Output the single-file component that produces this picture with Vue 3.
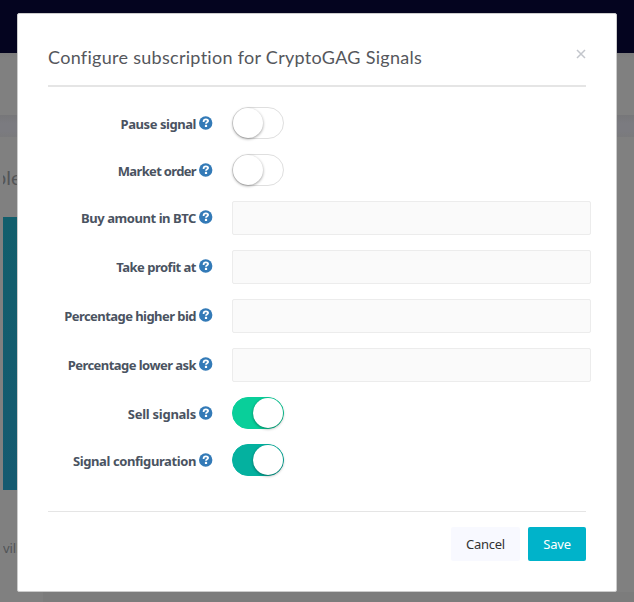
<template>
    <div class="page">
        <div class="topbar"></div>
        <div class="subheader"></div>
        <div class="divider"></div>
        <div class="backdrop-content">
            <div class="page-title"><span>ple</span></div>
            <div class="banner"></div>
            <div class="page-text">vill</div>
            <div class="page-footer"></div>
        </div>

        <div class="modal">
            <div class="modal-header">
                <h4><span class="title">Configure subscription for CryptoGAG Signals</span></h4>
                <button class="close" aria-label="Close">
                    <svg width="10" height="10" viewBox="0 0 10 10"><path d="M1 1L9 9M9 1L1 9" /></svg>
                </button>
            </div>
            <div class="modal-body">
                <div v-for="row in rows" :key="row.label" class="form-row">
                    <label :class="row.key">{{ row.label }}</label>
                    <svg class="help" width="14" height="14" viewBox="0 0 14 14">
                        <circle cx="6.7" cy="7" r="6.7" fill="#337ab7" />
                        <path d="M4.6 5.9C4.6 4 5.4 3.3 6.9 3.3C8.3 3.3 9.1 4 9.1 5C9.1 6.4 7 6.2 7 7.8" fill="none" stroke="#fff" stroke-width="1.8" />
                        <path d="M5.9 8.8H8.1V11H5.9Z" fill="#fff" />
                    </svg>
                    <input v-if="row.type === 'input'" type="text" class="field" disabled>
                    <div v-else :class="['switch', row.state]" @click="toggle(row)"><div class="knob"></div></div>
                </div>
            </div>
            <div class="modal-footer">
                <button class="btn cancel"><span>Cancel</span></button>
                <button class="btn save"><span>Save</span></button>
            </div>
        </div>
    </div>
</template>

<script setup>
import { reactive } from 'vue';

const rows = reactive([
    { key: 'pause', label: 'Pause signal', type: 'switch', state: '' },
    { key: 'market', label: 'Market order', type: 'switch', state: '' },
    { key: 'buy', label: 'Buy amount in BTC', type: 'input' },
    { key: 'profit', label: 'Take profit at', type: 'input' },
    { key: 'higher', label: 'Percentage higher bid', type: 'input' },
    { key: 'lower', label: 'Percentage lower ask', type: 'input' },
    { key: 'sell', label: 'Sell signals', type: 'switch', state: 'green' },
    { key: 'config', label: 'Signal configuration', type: 'switch', state: 'teal' },
]);

function toggle(row) {
    row.state = row.state ? '' : (row.key === 'config' ? 'teal' : 'green');
}
</script>

<style>
body{
    margin: 0;
    overflow: hidden;
}
</style>

<style scoped>
*{
    box-sizing: border-box;
}
.page{
    position: relative;
    width: 634px;
    height: 602px;
    overflow: hidden;
    background: #808080;
    font-family: 'Noto Sans', sans-serif;
    font-size: 13px;
}
.topbar{
    height: 53px;
    background: #04041f;
}
.subheader{
    height: 62px;
    background: linear-gradient(#7c7c7c, #808080 5px);
}
.divider{
    height: 22px;
    background: linear-gradient(#777779, #7b7b80 8px, #7b7b80 16px, #7a7a7c);
}
.backdrop-content{
    margin-left: 3px;
    overflow: hidden;
}
.page-title{
    height: 80px;
    padding-top: 28px;
    font-family: Lato, sans-serif;
    font-size: 20px;
    line-height: 24px;
    color: #535557;
}
.page-title span{
    margin-left: -8px;
}
.banner{
    width: 200px;
    height: 273px;
    background: linear-gradient(#125e6c, #155a70);
}
.page-text{
    height: 102px;
    padding-top: 48px;
    line-height: 20px;
    color: #515457;
    letter-spacing: -.1px;
}
.page-footer{
    height: 10px;
    margin-left: 40px;
    background: #7c7c7c;
}
.modal{
    position: absolute;
    left: 17px;
    top: 13px;
    width: 600px;
    height: 579px;
    padding: 30px;
    background: #fff;
    border: 1px solid #ccc;
    border-radius: 2px;
}
.modal-header{
    display: flex;
    justify-content: space-between;
    height: 43px;
    border-bottom: 2px solid #e5e5e5;
}
h4{
    margin: -1px 0 0;
    font-family: Lato, sans-serif;
    font-size: 18px;
    font-weight: 400;
    line-height: 28px;
    color: #55575c;
    white-space: nowrap;
}
.title{
    letter-spacing: .29px;
}
.close{
    width: 10px;
    height: 10px;
    margin-top: 5px;
    padding: 0;
    border: 0;
    background: none;
}
.close svg{
    display: block;
}
.close path{
    stroke: #c3c6cc;
    stroke-width: 1.5;
}
.modal-body{
    display: flex;
    flex-direction: column;
    gap: 15px;
    height: 424px;
    padding-top: 20px;
}
.form-row{
    display: flex;
}
label{
    width: 148px;
    flex-shrink: 0;
    padding-top: 8px;
    font-weight: 700;
    line-height: 18px;
    text-align: right;
    letter-spacing: -.5px;
    color: #4a5361;
    white-space: nowrap;
}
label.pause, label.buy{
    letter-spacing: -.44px;
}
label.market{
    letter-spacing: -.66px;
}
label.higher, label.lower{
    letter-spacing: -.55px;
}
label.sell{
    letter-spacing: -.26px;
}
label.config{
    letter-spacing: -.4px;
}
.help{
    margin: 9px 19px 0 3px;
    flex-shrink: 0;
}
.field{
    width: 359px;
    height: 34px;
    flex-shrink: 0;
    background: #fafafa;
    border: 1px solid #ececec;
    border-radius: 2px;
}
.switch{
    display: flex;
    width: 52px;
    height: 32px;
    padding: 1px;
    border: 1px solid #dfdfdf;
    border-radius: 16px;
    background: #fff;
}
.switch .knob{
    width: 30px;
    height: 30px;
    margin: -1px 0 0 0;
    border-radius: 50%;
    background: #fff;
    box-shadow: 0 1px 3px rgba(0, 0, 0, .4);
}
.switch:not(.green):not(.teal){
    padding: 1px 0;
}
.switch.green, .switch.teal{
    justify-content: flex-end;
    padding-right: 0;
}
.switch.green{
    background: #09cf9a;
    border-color: #09cf9a;
}
.switch.teal{
    background: #04b19f;
    border-color: #04b19f;
}
.modal-footer{
    display: flex;
    justify-content: flex-end;
    gap: 8px;
    padding-top: 15px;
    border-top: 1px solid #e5e5e5;
}
.btn{
    height: 34px;
    padding: 0;
    border: 0;
    border-radius: 2px;
    font-family: inherit;
    font-size: 13px;
    line-height: 34px;
}
.cancel{
    width: 69px;
    background: #f8f9ff;
    color: #333;
    letter-spacing: -.25px;
}
.save{
    width: 58px;
    background: #00b3ca;
    color: #fff;
    letter-spacing: -.2px;
}
</style>
